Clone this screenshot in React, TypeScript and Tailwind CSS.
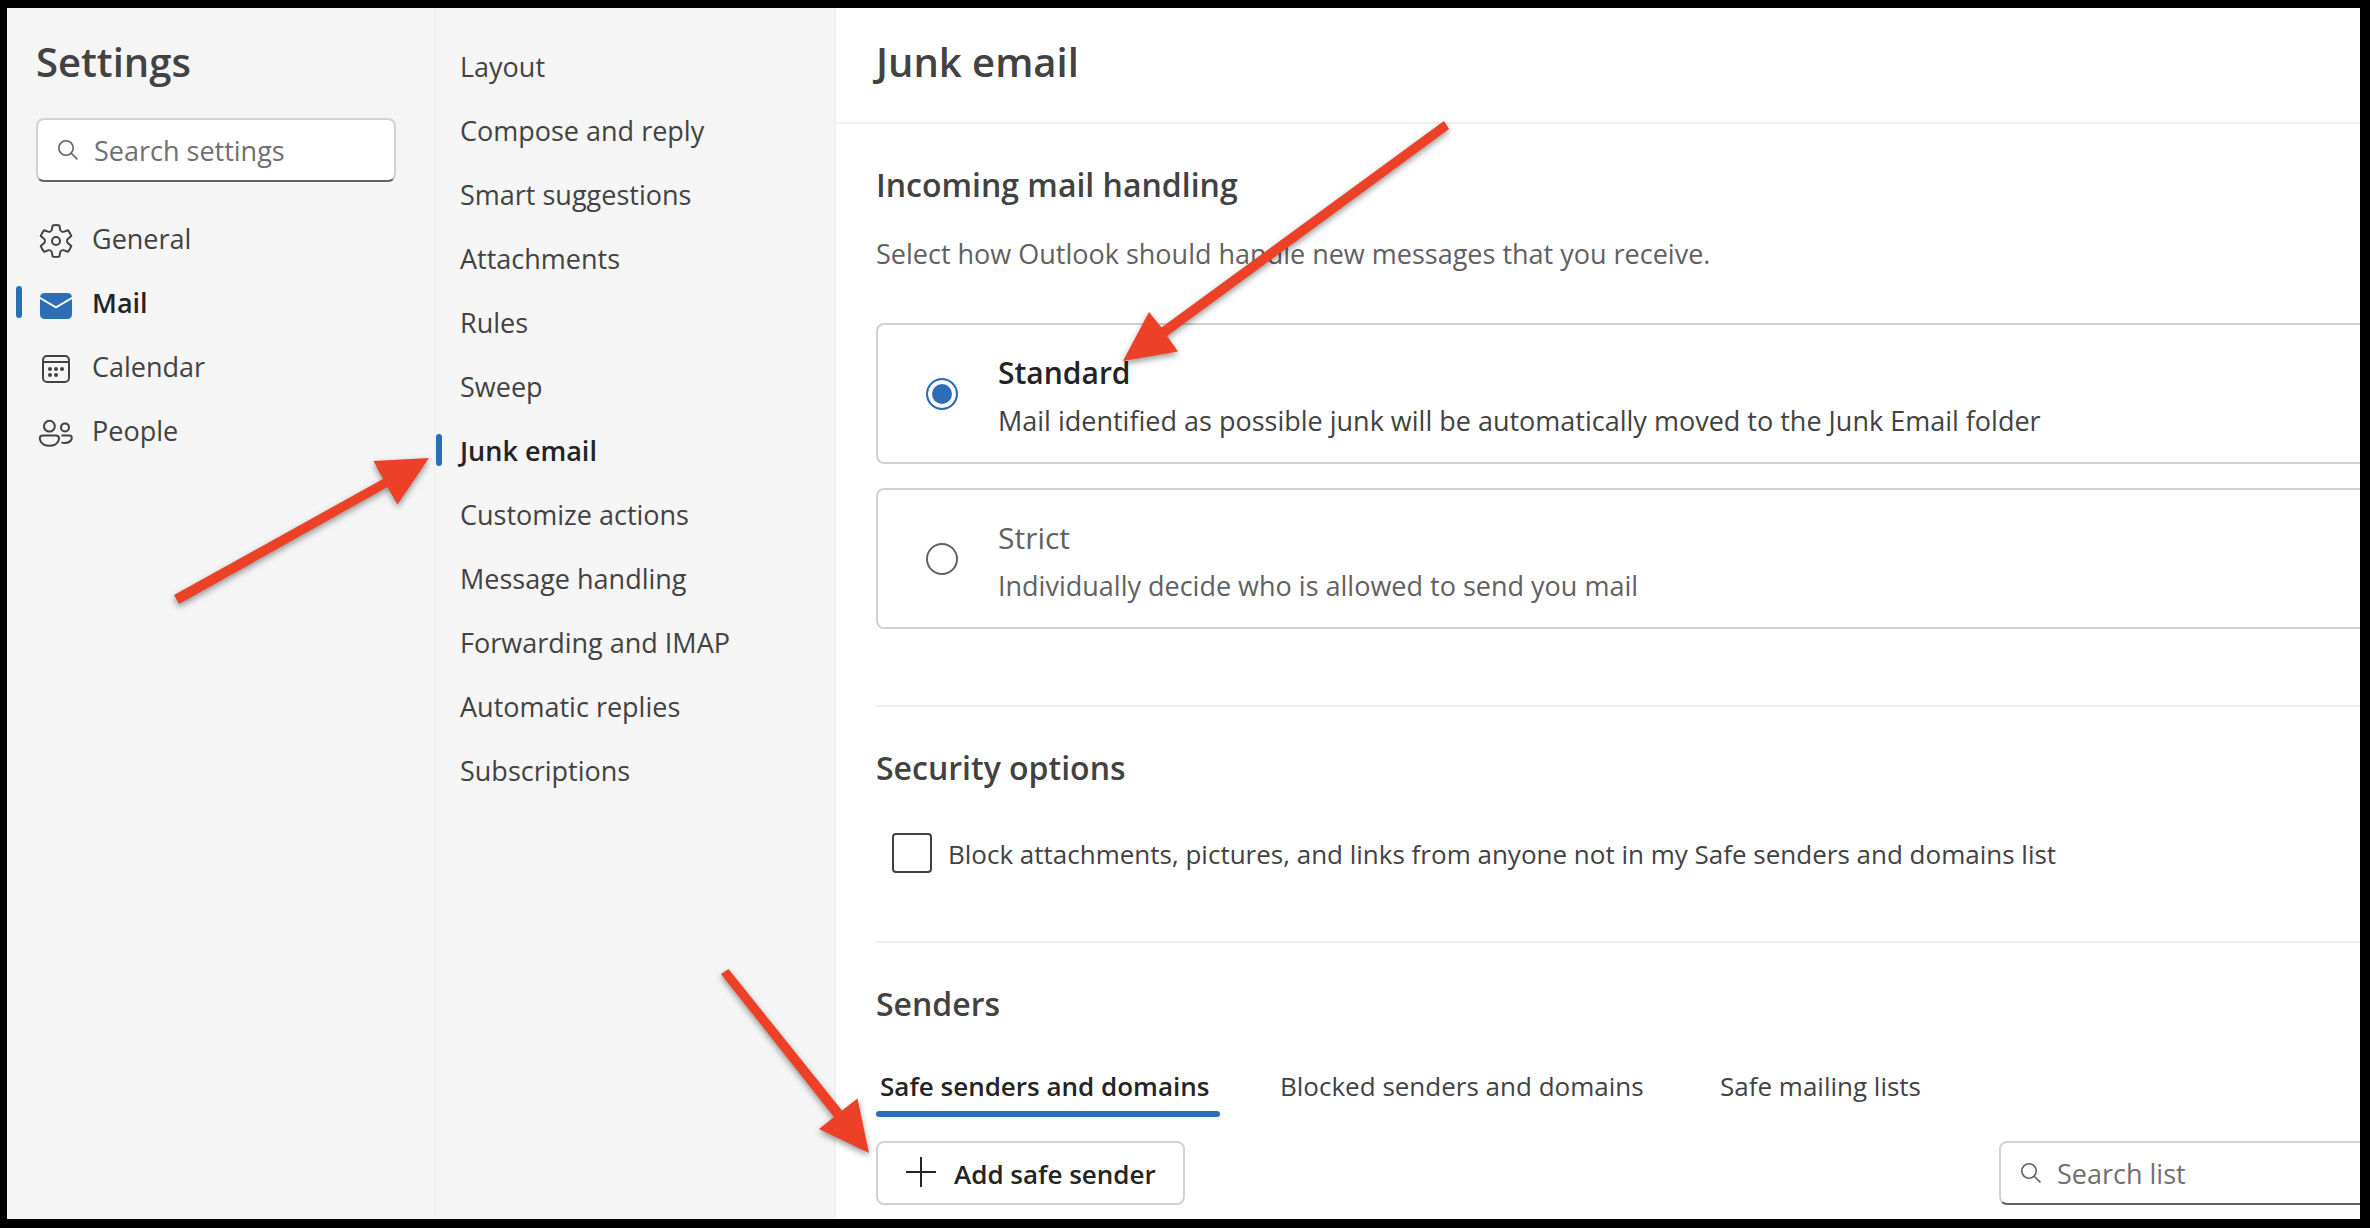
import * as React from 'react'

type NavItem = {
  label: string
  icon: React.ReactNode
}

const GearIcon = () => (
  <svg viewBox="0 0 20 20" className="size-10" fill="currentColor" aria-hidden="true">
    <path d="M1.91 7.38A8.5 8.5 0 0 1 3.7 4.3a.5.5 0 0 1 .54-.13l1.92.68a1 1 0 0 0 1.32-.76l.36-2a.5.5 0 0 1 .4-.4 8.53 8.53 0 0 1 3.55 0c.2.04.35.2.38.4l.37 2a1 1 0 0 0 1.32.76l1.92-.68a.5.5 0 0 1 .54.13 8.5 8.5 0 0 1 1.78 3.08c.06.2 0 .4-.15.54l-1.56 1.32a1 1 0 0 0 0 1.52l1.56 1.32a.5.5 0 0 1 .15.54 8.5 8.5 0 0 1-1.78 3.08.5.5 0 0 1-.54.13l-1.92-.68a1 1 0 0 0-1.32.76l-.37 2a.5.5 0 0 1-.38.4 8.53 8.53 0 0 1-3.56 0 .5.5 0 0 1-.39-.4l-.36-2a1 1 0 0 0-1.32-.76l-1.92.68a.5.5 0 0 1-.54-.13 8.5 8.5 0 0 1-1.78-3.08.5.5 0 0 1 .15-.54l1.56-1.32a1 1 0 0 0 0-1.52L2.06 7.92a.5.5 0 0 1-.15-.54Zm1.06 0 1.3 1.1a2 2 0 0 1 0 3.04l-1.3 1.1c.3.79.72 1.51 1.25 2.16l1.6-.58a2 2 0 0 1 2.63 1.53l.3 1.67a7.56 7.56 0 0 0 2.5 0l.3-1.67a2 2 0 0 1 2.64-1.53l1.6.57a7.5 7.5 0 0 0 1.24-2.15l-1.3-1.1a2 2 0 0 1 0-3.04l1.3-1.1a7.5 7.5 0 0 0-1.25-2.16l-1.6.57a2 2 0 0 1-2.63-1.52l-.3-1.67a7.55 7.55 0 0 0-2.5 0l-.3 1.67a2 2 0 0 1-2.63 1.53l-1.6-.57a7.5 7.5 0 0 0-1.25 2.15ZM7.5 10a2.5 2.5 0 1 1 5 0 2.5 2.5 0 0 1-5 0Zm1 0a1.5 1.5 0 1 0 3 0 1.5 1.5 0 0 0-3 0Z" />
  </svg>
)

const MailIcon = () => (
  <svg viewBox="0 0 20 20" className="size-10" fill="none" aria-hidden="true">
    <rect x="2" y="4" width="16" height="13" rx="2.25" fill="#2c6db8" />
    <path d="M1.5 6.2 10 11.2l8.5-5" stroke="#f5f5f5" />
  </svg>
)

const CalendarIcon = () => (
  <svg viewBox="0 0 20 20" className="size-10" fill="none" stroke="currentColor" aria-hidden="true">
    <rect x="3.5" y="3.5" width="13" height="13" rx="2" />
    <path d="M3.5 6.5h13" />
    <g fill="currentColor" stroke="none">
      <circle cx="7" cy="10" r="1" />
      <circle cx="10" cy="10" r="1" />
      <circle cx="13" cy="10" r="1" />
      <circle cx="7" cy="13" r="1" />
      <circle cx="10" cy="13" r="1" />
    </g>
  </svg>
)

const PeopleIcon = () => (
  <svg viewBox="0 0 20 20" className="size-10" fill="none" stroke="currentColor" aria-hidden="true">
    <circle cx="6.7" cy="6.6" r="2.7" />
    <circle cx="14.5" cy="7.2" r="2" />
    <path d="M3.4 11.2H10c.9 0 1.5.6 1.5 1.4 0 0 0 3.8-4.8 3.8s-4.8-3.8-4.8-3.8c0-.8.6-1.4 1.5-1.4Z" />
    <path d="M12.7 11.2h3.9c.8 0 1.3.5 1.3 1.2 0 0 0 2.6-3.4 2.6-.7 0-1.3-.1-1.8-.3" />
  </svg>
)

const SearchIcon = () => (
  <svg viewBox="0 0 20 20" className="size-5 shrink-0" fill="none" stroke="#616161" strokeWidth="1.6" aria-hidden="true">
    <circle cx="8" cy="8" r="7.2" />
    <path d="m13 13 6.4 6.4" />
  </svg>
)

const sections: NavItem[] = [
  { label: 'General', icon: <GearIcon /> },
  { label: 'Mail', icon: <MailIcon /> },
  { label: 'Calendar', icon: <CalendarIcon /> },
  { label: 'People', icon: <PeopleIcon /> },
]

const mailPages = [
  'Layout',
  'Compose and reply',
  'Smart suggestions',
  'Attachments',
  'Rules',
  'Sweep',
  'Junk email',
  'Customize actions',
  'Message handling',
  'Forwarding and IMAP',
  'Automatic replies',
  'Subscriptions',
]

const modes = [
  {
    id: 'standard',
    title: 'Standard',
    text: 'Mail identified as possible junk will be automatically moved to the Junk Email folder',
  },
  {
    id: 'strict',
    title: 'Strict',
    text: 'Individually decide who is allowed to send you mail',
  },
]

const tabs = [
  { label: 'Safe senders and domains', width: 'w-[344px]' },
  { label: 'Blocked senders and domains', width: 'w-[384px]' },
  { label: 'Safe mailing lists', width: 'w-[220px]' },
]

// Red callouts drawn over the page
const arrows = [
  '174,595 383,479 373.5,461 429,458 397.5,504.5 387.5,487 179,604',
  '1444,121 1161.5,327.5 1149,312 1123,361 1178,351.5 1167,336 1449,129',
  '721,974 834,1117 819,1129 869,1153 857.5,1098.5 842,1110.5 728.5,969',
]

export default function App() {
  const [section, setSection] = React.useState('Mail')
  const [page, setPage] = React.useState('Junk email')
  const [mode, setMode] = React.useState('standard')
  const [tab, setTab] = React.useState(tabs[0].label)

  return (
    <div className="relative flex min-h-screen overflow-hidden border-t-8 border-r-[10px] border-b-[9px] border-l-[7px] border-black bg-white font-['Open_Sans',sans-serif] text-[27px] leading-10 text-[#424242]">
      <aside className="w-[429px] shrink-0 border-r-2 border-[#f0f0f0] bg-[#f5f5f5] pt-[26px]">
        <h1 className="pl-[29px] text-[40px] leading-14 font-semibold">Settings</h1>
        <label className="mt-7 mr-[38px] ml-[29px] flex h-16 items-center gap-4 rounded-lg border-2 border-[#d1d1d1] border-b-[#616161] bg-white px-5">
          <SearchIcon />
          <input
            type="text"
            aria-label="Search settings"
            placeholder="Search settings"
            className="w-full min-w-0 bg-transparent pt-0.5 outline-none placeholder:text-[#707070]"
          />
        </label>
        <nav className="mt-6">
          {sections.map((item) => (
            <button
              key={item.label}
              onClick={() => setSection(item.label)}
              className={
                item.label === section
                  ? 'flex h-16 w-full items-center pl-[9px] font-semibold text-[#242424]'
                  : 'flex h-16 w-full items-center pl-[9px]'
              }
            >
              <span className={item.label === section ? 'h-8 w-1.5 rounded-full bg-[#2c6db8]' : 'h-8 w-1.5'} />
              <span className="mr-4 ml-3.5 pt-1.5">{item.icon}</span>
              <span className="pt-0.5">{item.label}</span>
            </button>
          ))}
        </nav>
      </aside>

      <nav className="w-[400px] shrink-0 border-r-2 border-[#f0f0f0] bg-[#f5f5f5] pt-[26px]">
        {mailPages.map((label) => (
          <button
            key={label}
            onClick={() => setPage(label)}
            className={
              label === page
                ? 'flex h-16 w-full items-center gap-[18px] font-semibold text-[#242424]'
                : 'flex h-16 w-full items-center gap-[18px]'
            }
          >
            <span className={label === page ? 'h-8 w-1.5 rounded-full bg-[#2c6db8]' : 'h-8 w-1.5'} />
            <span className="pt-0.5">{label}</span>
          </button>
        ))}
      </nav>

      <main className="min-w-0 flex-1">
        <header className="border-b-2 border-[#f0f0f0] pt-[26px] pb-8 pl-10">
          <h2 className="text-[40px] leading-14 font-semibold">Junk email</h2>
        </header>

        <div className="pl-10">
          <section className="border-b-2 border-[#f0f0f0] pt-[41px] pb-[76px]">
            <h3 className="text-[32px] leading-10 font-semibold">Incoming mail handling</h3>
            <p className="mt-[29px] text-[#616161]">Select how Outlook should handle new messages that you receive.</p>
            <div className="mt-[49px] space-y-6">
              {modes.map((m) => (
                <label
                  key={m.id}
                  className="flex items-center gap-10 rounded-l-lg border-2 border-r-0 border-[#d1d1d1] pl-12"
                >
                  <input
                    type="radio"
                    name="mode"
                    checked={mode === m.id}
                    onChange={() => setMode(m.id)}
                    className="size-8 shrink-0 appearance-none rounded-full border-2 border-[#616161] checked:border-[#2c6db8] checked:bg-[#2c6db8] checked:shadow-[inset_0_0_0_4px_white]"
                  />
                  <span className="flex flex-col gap-2 pt-7 pb-[21px]">
                    <span
                      className={
                        mode === m.id ? 'text-[30px] font-semibold text-[#242424]' : 'text-[30px] text-[#616161]'
                      }
                    >
                      {m.title}
                    </span>
                    <span className={mode === m.id ? '' : 'text-[#616161]'}>{m.text}</span>
                  </span>
                </label>
              ))}
            </div>
          </section>

          <section className="border-b-2 border-[#f0f0f0] pt-[41px] pb-[67px]">
            <h3 className="text-[32px] leading-10 font-semibold">Security options</h3>
            <label className="mt-11 flex items-center gap-4 pl-4 text-[26px]">
              <input
                type="checkbox"
                className="size-10 shrink-0 appearance-none rounded border-2 border-[#424242] checked:bg-[#2c6db8]"
              />
              <span className="pt-0.5">
                Block attachments, pictures, and links from anyone not in my Safe senders and domains list
              </span>
            </label>
          </section>

          <section className="pt-[41px] pb-3.5">
            <h3 className="text-[32px] leading-10 font-semibold">Senders</h3>
            <div role="tablist" className="mt-[42px] flex gap-14 text-[26px]">
              {tabs.map((t) => (
                <button key={t.label} role="tab" aria-selected={tab === t.label} onClick={() => setTab(t.label)} className={t.width}>
                  <span
                    className={
                      tab === t.label
                        ? 'block pb-[5px] pl-1 text-left font-semibold whitespace-nowrap text-[#242424]'
                        : 'block pb-[5px] pl-1 text-left whitespace-nowrap'
                    }
                  >
                    {t.label}
                  </span>
                  <span className={tab === t.label ? 'block h-1.5 rounded-full bg-[#2c6db8]' : 'block h-1.5'} />
                </button>
              ))}
            </div>
            <div className="mt-6 flex justify-between">
              <button className="flex h-16 w-[309px] items-center gap-4 rounded-lg border-2 border-[#d1d1d1] pl-7 text-[26px] font-semibold whitespace-nowrap text-[#242424]">
                <svg viewBox="0 0 32 32" className="size-8 shrink-0" fill="none" stroke="currentColor" strokeWidth="2" aria-hidden="true">
                  <path d="M15 0v30M0 15h30" />
                </svg>
                <span className="pt-0.5">Add safe sender</span>
              </button>
              <label className="flex h-16 w-[361px] items-center gap-4 rounded-l-lg border-2 border-r-0 border-[#d1d1d1] border-b-[#616161] pl-5">
                <SearchIcon />
                <input
                  type="text"
                  aria-label="Search list"
                  placeholder="Search list"
                  className="w-full min-w-0 bg-transparent pt-0.5 outline-none placeholder:text-[#707070]"
                />
              </label>
            </div>
          </section>
        </div>
      </main>

      <svg
        viewBox="7 8 2353 1211"
        width="2353"
        height="1211"
        className="pointer-events-none absolute top-0 left-0 max-w-none drop-shadow-[0_3px_3px_rgba(0,0,0,0.4)]"
        fill="#ec4027"
        aria-hidden="true"
      >
        {arrows.map((points) => (
          <polygon key={points} points={points} />
        ))}
      </svg>
    </div>
  )
}
